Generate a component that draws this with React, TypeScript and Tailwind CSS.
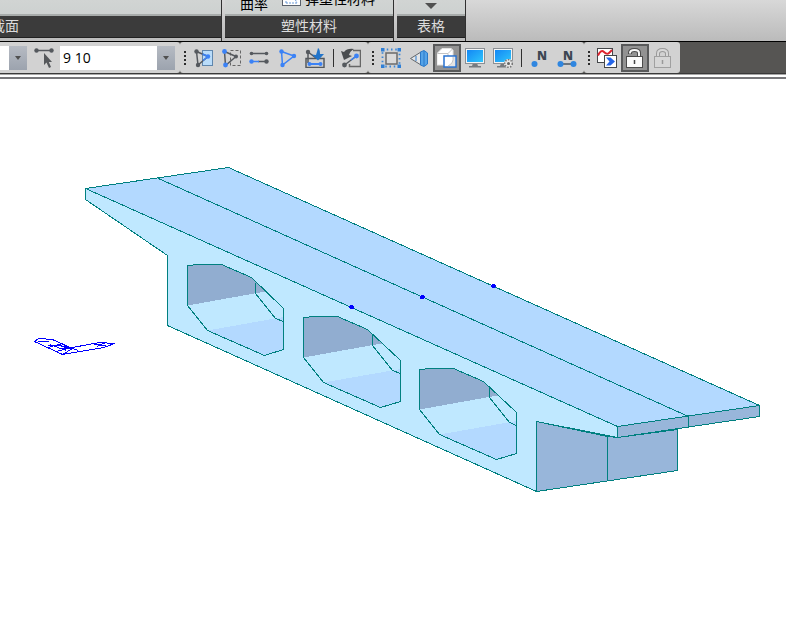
import type { ReactNode } from 'react';
import clsx from 'clsx';

const DARK = '#55595e';
const BLUE = '#3b82f6';

function Icon({ children }: { children: ReactNode }) {
  return (
    <svg viewBox="0 0 20 20" className="h-5 w-5" fill="none" aria-hidden="true">
      {children}
    </svg>
  );
}

function Monitor() {
  return (
    <>
      <path d="M8 15h4l1 3h3v1.5H4V18h3z" fill="#777b80" />
      <rect x="0.5" y="0.5" width="19" height="15" fill="#f4f4f4" stroke="#8b8f94" />
      <rect x="2" y="2" width="16" height="12" fill="url(#screen)" />
    </>
  );
}

function Padlock({ open }: { open?: boolean }) {
  return open ? (
    <Icon>
      <path d="M5 6V5Q5 2 9.5 2T14 5V9" stroke="#4b4b4b" strokeWidth="4" />
      <path d="M5 5.5V5Q5 2 9.5 2T14 5V9" stroke="#f5f5f5" strokeWidth="2" />
      <rect x="1.5" y="8.5" width="16" height="11" fill="#fafafa" stroke="#4b4b4b" />
      <path d="M9.500 12v4" stroke="#444" strokeWidth="1.5" />
    </Icon>
  ) : (
    <Icon>
      <path d="M5 9V5.5Q5 2 9.5 2T14 5.5V9" stroke="#9a9a9a" strokeWidth="4" />
      <path d="M5 9V5.5Q5 2 9.5 2T14 5.5V9" stroke="#d8d8d8" strokeWidth="2" />
      <rect x="1.5" y="8.5" width="16" height="11" fill="#d6d6d6" stroke="#a0a0a0" />
      <path d="M9.5 12v4" stroke="#999" strokeWidth="1.5" />
    </Icon>
  );
}

const icons: Record<string, ReactNode> = {
  selectWindow: (
    <Icon>
      <rect x="9.5" y="2.5" width="10" height="15" fill="#b9dcfa" stroke="#5f86ad" />
      <path d="M3.5 3.5L15 8.5L5 17Z" stroke={DARK} strokeWidth="1.5" />
      <path d="M9.5 6L15 8.5L10 12.500" stroke={BLUE} strokeWidth="1.5" />
      <circle cx="3.5" cy="3.5" r="2.2" fill={DARK} />
      <circle cx="5" cy="17" r="2.2" fill={DARK} />
      <circle cx="15" cy="8.5" r="2.2" fill={BLUE} />
    </Icon>
  ),
  unselectWindow: (
    <Icon>
      <rect x="9.5" y="2.5" width="10" height="15" stroke="#666" strokeDasharray="3 2" />
      <path d="M3.5 3.5L15 8.5L4.5 17.5Z" stroke={DARK} strokeWidth="1.5" />
      <circle cx="3.5" cy="3.5" r="2.4" fill={BLUE} />
      <circle cx="4.5" cy="17" r="2.4" fill={BLUE} />
      <circle cx="15" cy="8.5" r="2" fill={DARK} />
    </Icon>
  ),
  selectPrevious: (
    <Icon>
      <path d="M2 5.5H18M9 13.5H18" stroke={DARK} strokeWidth="1.5" />
      <path d="M2 13.5H10" stroke={BLUE} strokeWidth="1.5" />
      <circle cx="2.5" cy="5.5" r="1.8" fill={DARK} />
      <circle cx="17.5" cy="5.5" r="1.8" fill={DARK} />
      <circle cx="2.5" cy="13.5" r="2.2" fill={BLUE} />
      <circle cx="17.5" cy="13.5" r="2.2" fill={DARK} />
    </Icon>
  ),
  selectAll: (
    <Icon>
      <path d="M4.5 3.5L17 8L5.5 17Z" stroke={BLUE} strokeWidth="1.5" />
      <circle cx="4.5" cy="3.5" r="2.2" fill={BLUE} />
      <circle cx="17" cy="8" r="2.2" fill={BLUE} />
      <circle cx="5.5" cy="17" r="2.2" fill={BLUE} />
    </Icon>
  ),
  selectPlane: (
    <Icon>
      <rect x="1" y="10.5" width="18" height="9" stroke={DARK} strokeWidth="1.5" />
      <path d="M3 15V4L11 10" stroke={DARK} strokeWidth="1.5" />
      <circle cx="3" cy="4" r="2.2" fill={DARK} />
      <path d="M4 16H16" stroke={BLUE} strokeWidth="2" />
      <circle cx="4.5" cy="16" r="2" fill={BLUE} />
      <circle cx="15.5" cy="16" r="2" fill={BLUE} />
      <path d="M13 0Q15 1 15 6H19L13 12.5L7 6.500L11 7Q12 4 13 0Z" fill="#2274c9" />
    </Icon>
  ),
  selectRecent: (
    <Icon>
      <path d="M12 2.5H19.500V18.5H8.5V16" stroke="#666" strokeWidth="1.5" />
      <path d="M3.5 17L15.5 8" stroke={DARK} strokeWidth="1.5" />
      <path d="M10 12L15.5 8" stroke={BLUE} strokeWidth="1.5" />
      <circle cx="3.5" cy="17" r="2.4" fill={DARK} />
      <circle cx="15.5" cy="8" r="2.4" fill={BLUE} />
      <path d="M0 3L3 4Q6 0 13 1Q9 3 8 7L11 8L3 12Z" fill="#4a4d50" />
    </Icon>
  ),
  activate: (
    <Icon>
      <rect x="5" y="5" width="11" height="11" stroke="#6b6b6b" strokeWidth="1.5" fill="#dadada" />
      <rect x="1.5" y="1.5" width="17" height="17" stroke="#3a86d8" strokeWidth="1.8" strokeDasharray="1.5 2.75" />
      <path d="M0 0h3.5v3.5H0zM16.5 0H20v3.5h-3.5zM0 16.5h3.5V20H0zM16.5 16.5H20V20h-3.5z" fill="#2f7fd6" />
    </Icon>
  ),
  shrink: (
    <Icon>
      <path d="M1.5 10.5L12 4V17Z" fill="#e2e5e8" stroke="#62666a" />
      <path d="M11.5 4L15 2.500L18.5 5V16L15 18.5L11.5 17Z" fill="#54a3e8" stroke="#2a78c8" />
      <path d="M7 8V13M15 3V18" stroke="#2a78c8" />
    </Icon>
  ),
  hidden: (
    <Icon>
      <path d="M0 5.5L5 0.5H14L16 2V12L12 17H0Z" fill="#fff" stroke="#e3e3e3" />
      <path d="M0.5 5.5H11V16.5M11 5.5L15.5 1" stroke="#c4c4c4" />
      <rect x="7" y="8" width="12" height="11" fill="#fff" stroke="#2872cf" strokeWidth="1.5" />
      <path d="M16 9Q17 15 11 18H18V9Z" fill="#e4e4e4" />
      <path d="M16 9Q17 15 11 18" stroke="#c4c4c4" />
    </Icon>
  ),
  display: (
    <Icon>
      <Monitor />
    </Icon>
  ),
  displayOption: (
    <Icon>
      <Monitor />
      <circle cx="15.5" cy="15.5" r="4.5" fill="#e8e8e8" />
      <circle cx="15.5" cy="15.5" r="3.800" stroke="#777" strokeWidth="1.6" strokeDasharray="1.5 1.3" />
      <circle cx="15.5" cy="15.5" r="1.500" fill="#666" />
    </Icon>
  ),
  nodeNumber: (
    <Icon>
      <text x="8" y="12" className="font-['Open_Sans',sans-serif] text-[12px] font-extrabold" fill="#3c4652">N</text>
      <circle cx="5.5" cy="16" r="3" fill="#2f86e0" />
    </Icon>
  ),
  elementNumber: (
    <Icon>
      <text x="6" y="12" className="font-['Open_Sans',sans-serif] text-[12px] font-extrabold" fill="#3c4652">N</text>
      <path d="M4 16H17" stroke="#4a5662" strokeWidth="1.5" />
      <circle cx="3.5" cy="16" r="3" fill="#2f86e0" />
      <circle cx="16.5" cy="16" r="3" fill="#2f86e0" />
    </Icon>
  ),
  results: (
    <Icon>
      <rect x="0.5" y="0.5" width="15" height="14" fill="#fff" stroke="#44474a" />
      <path d="M1 7.5Q4 1 7 4T12 5L15 2" stroke="#de2430" strokeWidth="2" />
      <rect x="7.5" y="7.5" width="12" height="12" fill="#fff" stroke="#44474a" />
      <path d="M9 9.5H13.5L18 13.5L13.5 17.5H9L12.5 13.5Z" fill="#2565e8" />
    </Icon>
  ),
  unlocked: <Padlock open />,
  locked: <Padlock />,
};

function ToolButton({ name, label, pressed }: { name: string; label: string; pressed?: boolean }) {
  return (
    <button
      type="button"
      aria-label={label}
      aria-pressed={pressed}
      className={clsx(
        'flex h-7 w-7 shrink-0 items-center justify-center',
        pressed && 'border-2 border-[#58595a] bg-[#929292]'
      )}
    >
      <span className="shrink-0">{icons[name]}</span>
    </button>
  );
}

function Grip() {
  return (
    <div className="flex w-[9px] shrink-0 flex-col items-center gap-[2px]">
      {[0, 1, 2, 3].map(i => <span key={i} className="h-[2px] w-[2px] bg-[#2b2b2b]" />)}
    </div>
  );
}

function Separator() {
  return (
    <div className="flex w-2 shrink-0 justify-center">
      <span className="h-[18px] w-px bg-[#303030]" />
    </div>
  );
}

function Group({ children }: { children: ReactNode }) {
  return <div className="flex h-[31px] shrink-0 items-center rounded-[3px] bg-[#d2d2d2]">{children}</div>;
}

function DropButton({ label }: { label: string }) {
  return (
    <button
      type="button"
      aria-label={label}
      className="flex h-6 w-[18px] shrink-0 items-center justify-center bg-linear-to-b from-[#b6bbc3] to-[#9ca3ae]"
    >
      <svg viewBox="0 0 8 4" className="h-1 w-2"><path d="M1 0H7L4 4Z" fill="#505050" /></svg>
    </button>
  );
}

function RibbonPanel({ title, className, titleClass, children }: { title: string; className: string; titleClass?: string; children?: ReactNode }) {
  return (
    <section className={clsx('flex shrink-0 flex-col overflow-hidden border-r border-[#303030]', className)}>
      <div className="flex h-4 items-end overflow-hidden border-b-2 border-[#a7abaa] bg-linear-to-b from-[#d1d4d3] to-[#cdd1d0]">
        {children}
      </div>
      <h2 className={clsx('flex h-[22px] items-center border-b border-[#202020] bg-[#3b3b3b] pb-[2px] text-sm text-[#dcdcdc]', titleClass || 'justify-center')}>
        {title}
      </h2>
    </section>
  );
}

function Ribbon() {
  return (
    <header className="flex h-[41px] gap-[3px] overflow-hidden bg-linear-to-b from-[#d8d8d8] to-[#bbbbbb]">
      <RibbonPanel title="截面" className="w-[222px]" titleClass="-ml-[9px]" />
      <RibbonPanel title="塑性材料" className="w-[169px]">
        <button type="button" className="ml-[15px] pb-[2px] text-sm leading-4">曲率</button>
        <button type="button" className="ml-[14px] flex items-end gap-[3px] pb-[7px] text-sm leading-4">
          <svg viewBox="0 0 20 16" className="h-4 w-5" fill="none" aria-hidden="true">
            <rect x="0.5" y="0.5" width="18" height="14" fill="#fff" stroke="#59616c" />
            <path d="M4 12V4M4 12H15M12 6L15 12" stroke="#6b9bd8" strokeDasharray="2 1" />
          </svg>
          <span>弹塑性材料</span>
        </button>
      </RibbonPanel>
      <RibbonPanel title="表格" className="w-[69px]">
        <button type="button" aria-label="表格" className="flex w-full justify-center pb-[5px]">
          <svg viewBox="0 0 12 6" className="h-[6px] w-3"><path d="M0 0H12L6 6Z" fill="#505050" /></svg>
        </button>
      </RibbonPanel>
    </header>
  );
}

function Toolbar() {
  return (
    <div role="toolbar" className="border-y border-t-black border-b-[#3a3a3a] bg-[#565553]">
      <div className="flex overflow-hidden">
        <div className="flex h-[31px] w-[180px] shrink-0 items-center rounded-r-[3px] bg-[#d2d2d2]">
          <input aria-label="节点" className="h-6 w-[9px] shrink-0 bg-white" />
          <DropButton label="节点列表" />
          <button type="button" aria-label="选择单元" className="flex h-7 w-[33px] shrink-0 items-center justify-center">
            <Icon>
              <path d="M2 2.5H18" stroke={DARK} strokeWidth="1.5" />
              <circle cx="2.5" cy="2.5" r="2.2" fill={DARK} />
              <circle cx="17.5" cy="2.5" r="2.2" fill={DARK} />
              <path d="M10 5V17L12.5 14.5L15 20L17 19L14.8 14H18Z" fill="#55585b" />
            </Icon>
          </button>
          <input
            aria-label="单元"
            defaultValue="9 10"
            className="h-6 w-[97px] shrink-0 bg-white pl-[3px] font-['Open_Sans',sans-serif] text-sm text-black outline-none"
          />
          <DropButton label="单元列表" />
        </div>
        <Group>
          <Grip />
          <ToolButton name="selectWindow" label="窗口选择" />
          <ToolButton name="unselectWindow" label="窗口解除选择" />
          <ToolButton name="selectPrevious" label="选择前一个" />
          <ToolButton name="selectAll" label="全选" />
          <ToolButton name="selectPlane" label="平面选择" />
          <Separator />
          <ToolButton name="selectRecent" label="选择最新建立的个体" />
          <div className="w-[3px]" />
        </Group>
        <Group>
          <Grip />
          <ToolButton name="activate" label="激活" />
          <ToolButton name="shrink" label="收缩单元" />
          <ToolButton name="hidden" label="消隐" pressed />
          <ToolButton name="display" label="显示" />
          <ToolButton name="displayOption" label="显示选项" />
          <Separator />
          <ToolButton name="nodeNumber" label="节点号" />
          <ToolButton name="elementNumber" label="单元号" />
          <div className="w-[3px]" />
        </Group>
        <Group>
          <Grip />
          <ToolButton name="results" label="结果" />
          <ToolButton name="unlocked" label="前处理模式" pressed />
          <ToolButton name="locked" label="后处理模式" />
          <div className="w-[3px]" />
        </Group>
      </div>
    </div>
  );
}

// cells of the box girder; the far end outline drifts slightly with the perspective
const cells = [
  { x: 187.5, y: 265.5, right: 96, drift: 0 },
  { x: 303.5, y: 317.5, right: 97, drift: 1 },
  { x: 419.5, y: 369.5, right: 97, drift: 2 },
];

function Cell({ x, y, right, drift }: { x: number; y: number; right: number; drift: number }) {
  const outline = `M0 0L12 -1H34L64 12L${right} 43V84L77 90L20 65L0 40Z`;
  return (
    <g transform={`translate(${x} ${y})`}>
      <path d={outline} fill="#bfe8ff" stroke="none" />
      <path d="M0 0L12 -1H34L64 12L78 26L0 40Z" fill="#91add0" stroke="none" />
      <path d={`M20 65L${right} 51.5V84L77 90Z`} fill="#b3d9ff" stroke="none" />
      <path d={outline} fill="none" />
      <path d={`M${68 + drift} 17V28L${88 + drift} 53L${right} 56`} fill="none" />
    </g>
  );
}

function ModelView() {
  return (
    <svg viewBox="0 79 786 564" className="block w-full" role="img" aria-label="箱梁模型" shapeRendering="crispEdges">
      <g stroke="#008080" strokeWidth="1" strokeLinejoin="round">
        <path d="M536.5 421.5L607.5 436.5L617.5 437.5L677.5 429.5V470.5L536.5 491.5Z" fill="#98b6da" />
        <path d="M607.5 436.5V480.5" />
        <path d="M85.5 188.5V199.5L167.5 255.5V325.5L536.5 491.5V421.5L617.5 437.5V426.5Z" fill="#bfe8ff" />
        <path d="M85.5 188.5L228.5 167.5L759.5 405.5L617.5 426.5Z" fill="#b3d9ff" />
        <path d="M617.5 426.5L759.5 405.5V416.5L617.5 437.5Z" fill="#98b6da" />
        <path d="M158.5 178.5L688.5 416.5V427.5" fill="none" />
        {cells.map(c => <Cell key={c.x} {...c} />)}
      </g>
      <path d="M350 305h3v1h1v3h-4v-1h-1v-2h1zM421 295h3v1h1v2h-1v1h-4v-3h1zM492 284h3v1h1v2h-1v1h-3v-1h-1v-2h1z" fill="#0000ff" />
      <g fill="none" stroke="#0000ff">
        <path d="M34.5 341.5L38.5 338.5L52.5 339.5L72.5 348.5L62.5 354.5Z" />
        <path d="M38 341.5H48.5M48 347.5L62.5 343.5L68 348.5L56 351.5M50 344.5L66 350.5M48 345.5H60L72 349.5" />
        <path d="M62.5 354.5L104 347.5L114.5 343.5L99.5 342.5L72.5 347.5L60 348.5" />
        <path d="M91 343.5L108.5 346.5M97 346.5L105.5 342.5M72.5 348.5L78 350.5" />
      </g>
    </svg>
  );
}

export default function App() {
  return (
    <div className="min-h-screen overflow-hidden bg-white font-['Liberation_Sans','Noto_Sans_CJK_SC',sans-serif] text-black">
      <svg className="absolute h-0 w-0" aria-hidden="true">
        <defs>
          <linearGradient id="screen" x1="0" y1="0" x2="1" y2="1">
            <stop offset="0" stopColor="#1387f5" />
            <stop offset="1" stopColor="#2fc5fb" />
          </linearGradient>
        </defs>
      </svg>
      <Ribbon />
      <Toolbar />
      <div className="h-[5px] border-t border-b-2 border-t-[#a8a8a8] border-b-[#77777a] bg-white" />
      <ModelView />
    </div>
  );
}
